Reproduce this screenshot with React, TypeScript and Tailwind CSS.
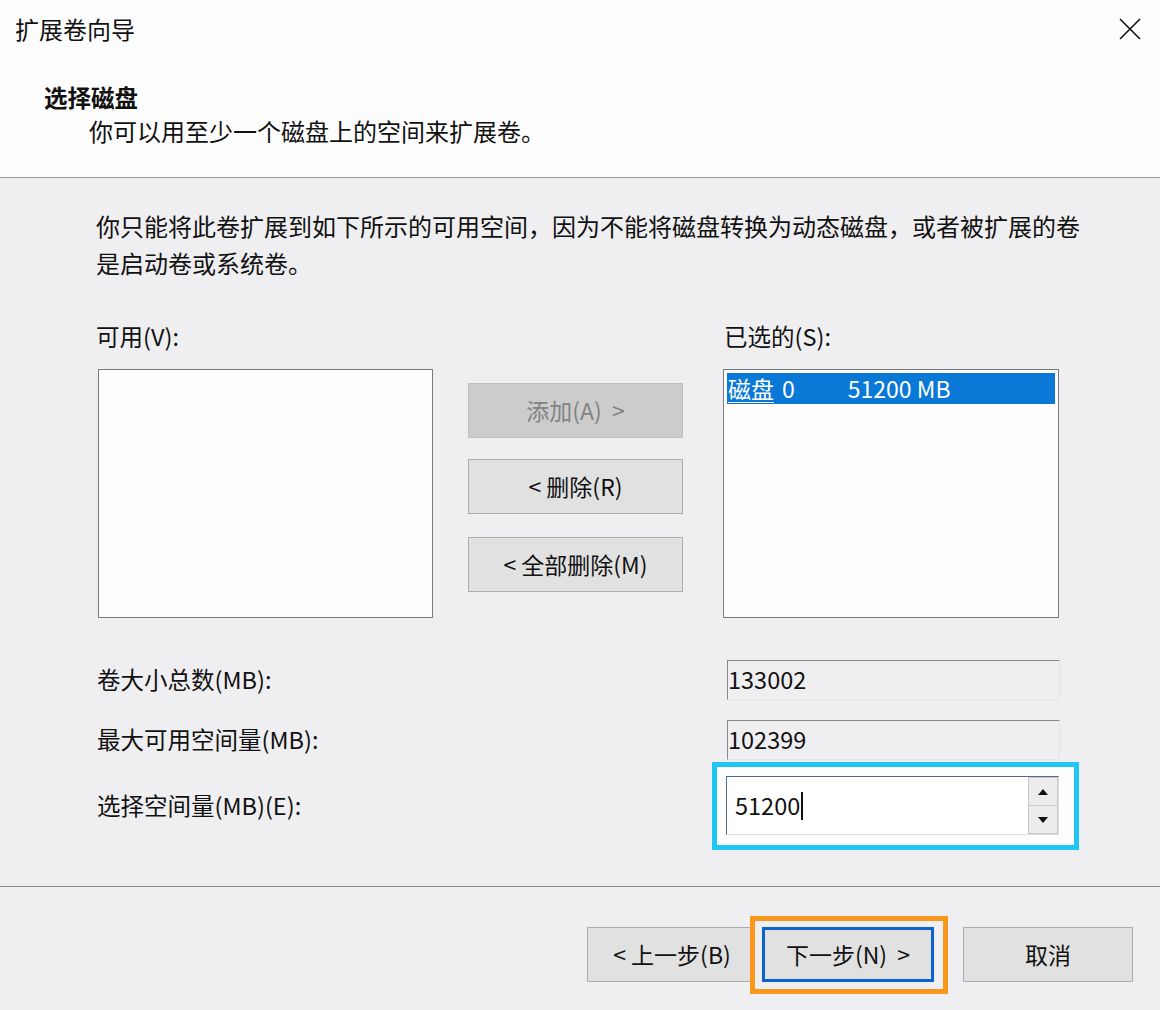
import { FC } from 'react';

const font = { fontFamily: '"Noto Sans CJK SC", "Noto Sans", sans-serif' };

const WinButton: FC<{ label: string; disabled?: boolean; className?: string }> = ({ label, disabled, className }) => (
    <button
        className={
            'flex items-center justify-center border text-[23px] whitespace-pre ' +
            (disabled
                ? 'bg-[#cccccc] border-[#bfbfbf] text-[#838383] '
                : 'bg-[#e1e1e1] border-[#adadad] text-[#111] ') +
            (className ?? '')
        }
    >
        {label}
    </button>
);

const ReadonlyField: FC<{ label: string; value: string; className?: string }> = ({ label, value, className }) => (
    <div className={'flex items-center ' + (className ?? '')}>
        <div className="w-[631px] text-[23.5px] text-[#111] pl-[1px]">{label}</div>
        <div className="w-[333px] h-[40px] border-t border-l border-[#8a8a8a] border-r border-b border-r-[#e4e3e5] border-b-[#e4e3e5] flex items-center text-[23.5px] text-[#111]">
            {value}
        </div>
    </div>
);

export default function App() {
    return (
        <div className="w-[1160px] h-[1010px] bg-[#efeef0] flex flex-col overflow-hidden" style={font}>
            {/* header */}
            <div className="h-[178px] bg-[#fdfdfe] border-b border-[#9c9c9c] relative">
                <div className="pl-[15px] pt-[13px] text-[24px] leading-[32px] text-[#111]">扩展卷向导</div>
                <svg className="absolute right-[19px] top-[18px]" width="22" height="22" viewBox="0 0 22 22">
                    <path d="M1 1 L21 21 M21 1 L1 21" stroke="#111" strokeWidth="1.6" />
                </svg>
                <div className="pl-[44px] mt-[36px] text-[23.5px] leading-[32px] font-bold text-[#111]">选择磁盘</div>
                <div className="pl-[89px] mt-[2px] text-[24px] leading-[32px] text-[#111]">你可以用至少一个磁盘上的空间来扩展卷。</div>
            </div>

            {/* body */}
            <div className="h-[708px] pl-[96px] pt-[29px] text-[#111]">
                <p className="text-[24px] leading-[37px]">
                    你只能将此卷扩展到如下所示的可用空间，因为不能将磁盘转换为动态磁盘，或者被扩展的卷
                    <br />
                    是启动卷或系统卷。
                </p>

                <div className="flex mt-[40px] text-[23.5px] leading-[30px]">
                    <div className="w-[628px]">可用(V):</div>
                    <div>已选的(S):</div>
                </div>

                <div className="flex mt-[18px]">
                    <div className="w-[335px] h-[249px] ml-[2px] bg-[#fdfdfe] border border-[#7a7a7a]"></div>
                    <div className="flex flex-col ml-[35px] pt-[14px]">
                        <WinButton label="添加(A)  >" disabled className="w-[215px] h-[55px]" />
                        <WinButton label="< 删除(R)" className="w-[215px] h-[55px] mt-[21px]" />
                        <WinButton label="< 全部删除(M)" className="w-[215px] h-[55px] mt-[23px]" />
                    </div>
                    <div className="w-[336px] h-[249px] ml-[40px] bg-[#fdfdfe] border border-[#7a7a7a] p-[3px]">
                        <div className="h-[31px] bg-[#0a78d7] text-white text-[23px] leading-[31px] flex pl-[1px]">
                            <span className="underline underline-offset-4 decoration-1">磁盘</span>
                            <span className="ml-[8px]">0</span>
                            <span className="ml-[53px]">51200 MB</span>
                        </div>
                    </div>
                </div>

                <ReadonlyField label="卷大小总数(MB):" value="133002" className="mt-[42px]" />
                <ReadonlyField label="最大可用空间量(MB):" value="102399" className="mt-[20px]" />

                <div className="flex items-center mt-[2px]">
                    <div className="w-[616px] text-[23.5px] text-[#111] pl-[1px]">选择空间量(MB)(E):</div>
                    <div className="border-[5px] border-[#1ec6f1] bg-[#fdfdfe] pt-[9px] pb-[10px] pl-[9px] pr-[15px]">
                        <div className="w-[333px] h-[59px] flex border-t border-l border-[#4a6a98] border-r border-b border-r-[#dcdcdc] border-b-[#dcdcdc] bg-white">
                            <div className="flex-1 flex items-center pl-[8px] text-[23.5px] text-[#111]">
                                51200<span className="w-[2px] h-[28px] bg-[#111] ml-[1px]"></span>
                            </div>
                            <div className="w-[30px] flex flex-col border border-[#c8c8c8] bg-[#f4f4f4]">
                                <div className="flex-1 flex items-center justify-center border-b border-[#c8c8c8] bg-[#ececec]">
                                    <svg width="10" height="6" viewBox="0 0 10 6"><path d="M0 6 L5 0 L10 6 Z" fill="#111" /></svg>
                                </div>
                                <div className="flex-1 flex items-center justify-center bg-[#ececec]">
                                    <svg width="10" height="6" viewBox="0 0 10 6"><path d="M0 0 L10 0 L5 6 Z" fill="#111" /></svg>
                                </div>
                            </div>
                        </div>
                    </div>
                </div>
            </div>

            {/* footer */}
            <div className="flex-1 border-t border-[#8a8a8a] flex items-center justify-end pr-[27px] pt-[12px]">
                <WinButton label="< 上一步(B)" className="w-[170px] h-[55px]" />
                <div className="-ml-[7px] border-[5px] border-[#f7971c] bg-[#efeef0] pt-[6px] pb-[7px] pl-[7px] pr-[9px] relative">
                    <button className="w-[172px] h-[55px] flex items-center justify-center bg-[#e1e1e1] border-[3px] border-[#0c63cf] text-[23px] text-[#111] whitespace-pre">
                        下一步(N)  &gt;
                    </button>
                </div>
                <WinButton label="取消" className="w-[170px] h-[55px] ml-[15px]" />
            </div>
        </div>
    );
}
